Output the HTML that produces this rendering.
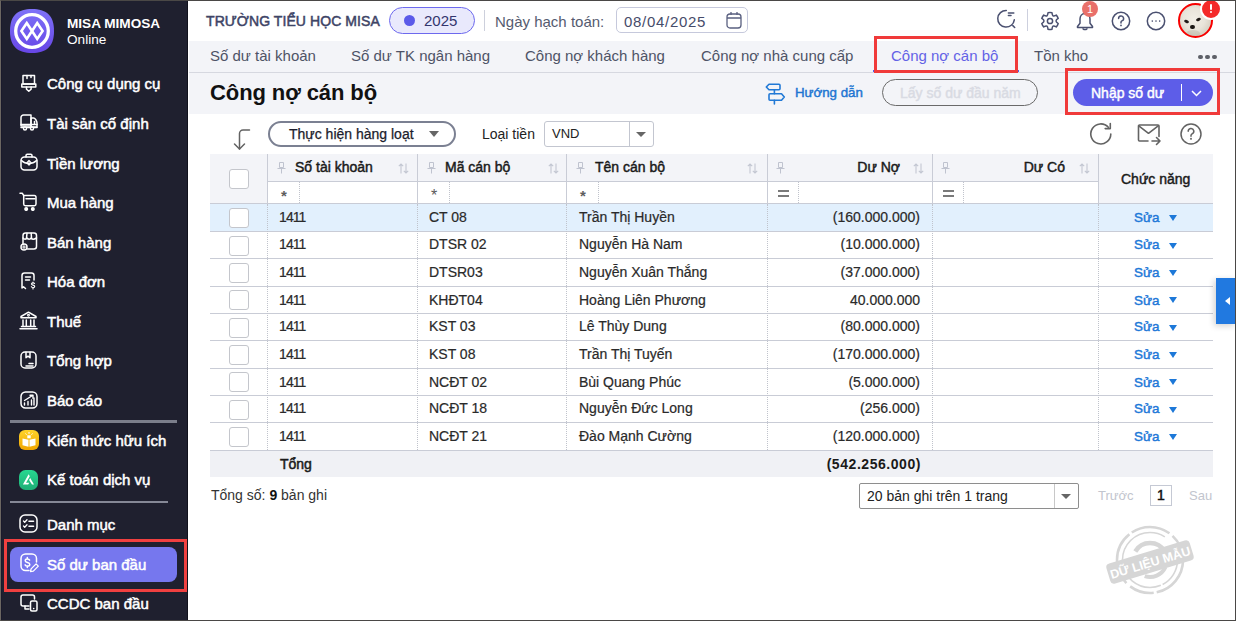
<!DOCTYPE html>
<html><head><meta charset="utf-8">
<style>
*{margin:0;padding:0;box-sizing:border-box}
html,body{width:1236px;height:621px;overflow:hidden;background:#fff;font-family:"Liberation Sans",sans-serif}
.abs{position:absolute}
#frame{position:absolute;left:0;top:0;width:1236px;height:621px;border:1px solid #4a4846;border-left-color:#6b6661;z-index:50;pointer-events:none}
#side{position:absolute;left:0;top:0;width:188px;height:621px;background:#1f202f;border-right:1px solid #10111c;box-shadow:inset 2px 0 #1a1a2c}
.mi{position:absolute;left:47px;color:#fff;font-size:15px;font-weight:normal;white-space:nowrap;-webkit-text-stroke:0.5px #fff}
.sb{font-weight:normal;-webkit-text-stroke:0.45px currentColor}
.ic{position:absolute;left:20px;width:18px;height:18px}
#top{position:absolute;left:188px;top:0;width:1048px;height:41px;background:#fff}
#tabs{position:absolute;left:189px;top:41px;width:1047px;height:32px;background:#f3f4f8;border-bottom:1px solid #d6d8e0}
.tab{position:absolute;top:6px;font-size:15px;color:#4e5366;white-space:nowrap}
#hdr{position:absolute;left:189px;top:73px;width:1047px;height:41px;background:#f3f4f8}
#content{position:absolute;left:189px;top:114px;width:1047px;height:507px;background:#fff}
</style></head><body>
<div id="side">
  
  <div class="abs" style="left:67px;top:16px;color:#fff;font-size:13.6px;font-weight:bold;white-space:nowrap">MISA MIMOSA</div>
  <div class="abs" style="left:67px;top:32px;color:#fff;font-size:13.6px">Online</div>
  <div class="mi" style="top:75px">Công cụ dụng cụ</div>
  <div class="mi" style="top:115px">Tài sản cố định</div>
  <div class="mi" style="top:155px">Tiền lương</div>
  <div class="mi" style="top:194px">Mua hàng</div>
  <div class="mi" style="top:234px">Bán hàng</div>
  <div class="mi" style="top:273px">Hóa đơn</div>
  <div class="mi" style="top:313px">Thuế</div>
  <div class="mi" style="top:352px">Tổng hợp</div>
  <div class="mi" style="top:392px">Báo cáo</div>
  <div class="abs" style="left:10px;top:420px;width:167px;height:3px;background:#7b7e8b"></div>
  <div class="mi" style="top:432px">Kiến thức hữu ích</div>
  <div class="mi" style="top:471px">Kế toán dịch vụ</div>
  <div class="abs" style="left:10px;top:501px;width:158px;height:2px;background:#858896"></div>
  <div class="mi" style="top:516px">Danh mục</div>
  <div class="abs" style="left:4px;top:539px;width:183px;height:53px;border:3px solid #f04040"></div>
  <div class="abs" style="left:10px;top:547px;width:167px;height:35px;border-radius:8px;background:#7677ee"></div>
<svg class="abs" style="left:21px;top:74px" width="16" height="18" viewBox="0 0 16 18" stroke="#fff" stroke-width="1.5" fill="none" stroke-linecap="round" stroke-linejoin="round"><path d="M2 1.5h11.5v8.5H2z"/><path d="M0.8 10h14v3H0.8z"/><path d="M5.5 13v2.2l2.3 2 2.3-2V13"/><path d="M6 1.5v3M10 1.5v2"/></svg>
<svg class="abs" style="left:20px;top:114px" width="18" height="17" viewBox="0 0 18 17" stroke="#fff" stroke-width="1.5" fill="none" stroke-linecap="round" stroke-linejoin="round"><path d="M1 3.5a2.5 2.5 0 0 1 2.5-2.5h7.5v11H1z"/><path d="M11 4h2.5c1.5 0 3.5 3 3.5 5v4h-6z"/><path d="M14.5 7.5v2" /><path d="M1 10.5h16"/><path d="M1 13.5h16"/><circle cx="5" cy="14.5" r="1.5" fill="#1f202f"/><circle cx="12" cy="14.5" r="1.5" fill="#1f202f"/></svg>
<svg class="abs" style="left:20px;top:153px" width="18" height="18" viewBox="0 0 18 18" stroke="#fff" stroke-width="1.5" fill="none" stroke-linecap="round" stroke-linejoin="round"><path d="M6 4V2.5c0-.8.5-1.3 1.3-1.3h3.4c.8 0 1.3.5 1.3 1.3V4"/><rect x="1" y="4" width="16" height="13" rx="3.5"/><path d="M1.5 7.5c2 2 4.5 3 7.5 3s5.5-1 7.5-3"/><path d="M9 7.5l2.2 2.3L9 12 6.8 9.8z" stroke-width="1.2"/><path d="M9 8.3v3" stroke-width="0.9"/></svg>
<svg class="abs" style="left:19px;top:192px" width="19" height="19" viewBox="0 0 19 19" stroke="#fff" stroke-width="1.5" fill="none" stroke-linecap="round" stroke-linejoin="round"><path d="M1 1.2h2.2l1.5 2.3v8.5c0 1 .6 1.7 1.6 1.7h9c1 0 1.7-.7 1.7-1.7V5.3c0-1-.7-1.8-1.7-1.8H4.7"/><path d="M7 6.8h9"/><circle cx="7.2" cy="17" r="1.3" fill="#fff"/><circle cx="13.8" cy="17" r="1.3" fill="#fff"/></svg>
<svg class="abs" style="left:20px;top:232px" width="19" height="19" viewBox="0 0 19 19" stroke="#fff" stroke-width="1.5" fill="none" stroke-linecap="round" stroke-linejoin="round"><path d="M3 12.5V3.5C3 2 4 1 5.5 1h8.5c1.5 0 2.5 1 2.5 2.5v11c0 1.5-1 2.5-2.5 2.5H7.5"/><path d="M3 6c1.2 1.5 3 1.5 4 0 1 1.5 3 1.5 4.2 0 1 1.5 3 1.5 5.3 0"/><path d="M7 1.2l-.5 4.8M11.2 1.2l.3 4.8"/><circle cx="4" cy="15" r="3"/><path d="M4 13.5v3M2.5 15h3" stroke-width="1.1"/></svg>
<svg class="abs" style="left:21px;top:272px" width="15" height="18" viewBox="0 0 15 18" stroke="#fff" stroke-width="1.5" fill="none" stroke-linecap="round" stroke-linejoin="round"><path d="M13 8V3.5C13 2 12 1 10.5 1h-7C2 1 1 2 1 3.5V16l1.5-1.2L4.5 16.5"/><path d="M4.5 5h5M4.5 8h4"/><path d="M12 10.2v.8M12 16.2v.8M13.5 11.5c-.3-.5-.8-.7-1.5-.7-.9 0-1.5.4-1.5 1.1 0 1.6 3.2.8 3.2 2.5 0 .7-.7 1.1-1.6 1.1-.8 0-1.4-.3-1.7-.8" stroke-width="1.2"/></svg>
<svg class="abs" style="left:19px;top:311px" width="19" height="19" viewBox="0 0 19 19" stroke="#fff" stroke-width="1.5" fill="none" stroke-linecap="round" stroke-linejoin="round"><path d="M2 5.5L9.5 1.2 17 5.5v1.3H2z"/><circle cx="9.5" cy="4.3" r="0.9" stroke-width="1.1"/><path d="M4 9v6M7.3 9v6M11.7 9v6M15 9v6"/><path d="M2.5 15.5h14M1 17.8h17"/></svg>
<svg class="abs" style="left:20px;top:351px" width="17" height="18" viewBox="0 0 17 18" stroke="#fff" stroke-width="1.5" fill="none" stroke-linecap="round" stroke-linejoin="round"><rect x="1" y="1" width="15" height="16" rx="4"/><path d="M6 1.2v5.5l2-1.5 2 1.5V1.2"/><path d="M9 12.5h4M6 15h7"/></svg>
<svg class="abs" style="left:20px;top:391px" width="18" height="18" viewBox="0 0 18 18" stroke="#fff" stroke-width="1.5" fill="none" stroke-linecap="round" stroke-linejoin="round"><rect x="1" y="1" width="16" height="16" rx="4.5"/><path d="M4.5 14v-2M8 14v-3.5M11.5 14V9M14 14V7" stroke-width="1.4"/><path d="M4.5 9.5L12.5 4.5M10 4.2h3v3" stroke-width="1.4"/></svg>
<svg class="abs" style="left:19px;top:514px" width="19" height="19" viewBox="0 0 19 19" stroke="#fff" stroke-width="1.5" fill="none" stroke-linecap="round" stroke-linejoin="round"><rect x="1" y="1" width="17" height="17" rx="5"/><path d="M4.5 7l1.2 1.2L8 5.8M4.5 12l1.2 1.2L8 10.8" stroke-width="1.3"/><path d="M10 7.2h4.5M10 12.2h4.5" stroke-width="1.6"/></svg>
<svg class="abs" style="left:20px;top:553px" width="19" height="20" viewBox="0 0 19 20" stroke="#fff" stroke-width="1.5" fill="none" stroke-linecap="round" stroke-linejoin="round"><path d="M16.5 9V5.5c0-2.5-2-4.5-4.5-4.5H5.5C3 1 1 3 1 5.5V13c0 2.5 2 4.5 4.5 4.5H9"/><path d="M9.6 7.2c-.4-.8-1.1-1.2-2.2-1.2-1.3 0-2.2.7-2.2 1.7 0 2.4 4.6 1.2 4.6 3.7 0 1-1 1.7-2.3 1.7-1.1 0-2-.5-2.4-1.3M7.3 4.6v1.4M7.3 13.1v1.4" stroke-width="1.5"/><path d="M10.5 18.5l.6-2.6 5-5 2.2 2.2-5 5z" stroke-width="1.3"/></svg>
<svg class="abs" style="left:20px;top:594px" width="18" height="18" viewBox="0 0 18 18" stroke="#fff" stroke-width="1.5" fill="none" stroke-linecap="round" stroke-linejoin="round"><path d="M14.5 5V3c0-1.1-.9-2-2-2H3C1.9 1 1 1.9 1 3v7c0 1.1.9 2 2 2h6"/><path d="M5 12v3h4"/><rect x="10.5" y="7" width="6.5" height="10" rx="1.5"/><path d="M13.7 14.5v.1" stroke-width="1.6"/></svg>
<svg class="abs" style="left:19px;top:430px" width="20" height="20" viewBox="0 0 20 20"><defs><linearGradient id="gy" x1="0" y1="0" x2="0" y2="1"><stop offset="0" stop-color="#ffd42a"/><stop offset="1" stop-color="#f0a500"/></linearGradient></defs><rect x="0" y="0" width="20" height="20" rx="6" fill="url(#gy)"/><path d="M3.5 8.5l6 1.3v7l-6-1.5zM16.5 8.5l-6 1.3v7l6-1.5z" fill="#fff"/><rect x="8.3" y="5.3" width="3.4" height="3" fill="#fff"/><path d="M10 2v1.8M6.5 3.5l1 1.2M13.5 3.5l-1 1.2" stroke="#fff" stroke-width="1"/></svg>
<svg class="abs" style="left:19px;top:470px" width="19" height="20" viewBox="0 0 19 20"><defs><linearGradient id="gg" x1="0" y1="0" x2="0" y2="1"><stop offset="0" stop-color="#27d790"/><stop offset="1" stop-color="#1eae76"/></linearGradient></defs><rect x="0" y="0" width="19" height="20" rx="6.5" fill="url(#gg)"/><path d="M9.6 4.2L10.8 6.3 7 12.7h3.2l-1 1.7H3.9z" fill="#fff"/><path d="M11.2 8.1L15 14.4h-2l-2.9-4.5z" fill="#fff"/></svg>
<svg class="abs" style="left:10px;top:9px" width="44" height="44" viewBox="0 0 44 44"><defs><linearGradient id="lg" x1="0" y1="0" x2="0" y2="1"><stop offset="0" stop-color="#7e72f8"/><stop offset="1" stop-color="#6746e6"/></linearGradient></defs><path d="M22 0C36 0 44 6 44 22S36 44 22 44 0 38 0 22 8 0 22 0z" fill="url(#lg)"/><circle cx="22" cy="22" r="16.3" fill="none" stroke="#fff" stroke-width="3.3"/><path d="M16.8 14L11.4 22 16.8 30 22 22 27.2 30 32.6 22 27.2 14 22 22z" fill="none" stroke="#fff" stroke-width="2.6" stroke-linejoin="miter"/></svg>
  <div class="mi" style="top:556px">Số dư ban đầu</div>
  <div class="mi" style="top:595px">CCDC ban đầu</div>
</div>
<div id="top">
  <div class="abs" style="left:18px;top:13px;font-size:14px;color:#3e4466;white-space:nowrap;letter-spacing:0.08px;-webkit-text-stroke:0.5px #3e4466">TRƯỜNG TIỂU HỌC MISA</div>
  <div class="abs" style="left:201px;top:7px;width:86px;height:27px;border:1px solid #6d69ee;border-radius:14px;background:#e9e9fc"></div>
  <div class="abs" style="left:216px;top:15px;width:11px;height:11px;border-radius:50%;background:#5b5ae9"></div>
  <div class="abs" style="left:236px;top:12px;font-size:15px;color:#33356e">2025</div>
  <div class="abs" style="left:296px;top:10px;width:1px;height:21px;background:#cdd0dc"></div>
  <div class="abs" style="left:307px;top:13px;font-size:15px;color:#555b70;white-space:nowrap">Ngày hạch toán:</div>
  <div class="abs" style="left:428px;top:7px;width:132px;height:26px;border:1px solid #c6c9dc;border-radius:5px"></div>
  <div class="abs" style="left:436px;top:13px;font-size:15px;color:#464c6a;letter-spacing:0.7px">08/04/2025</div>
  <svg class="abs" style="left:538px;top:11px" width="16" height="18" viewBox="0 0 16 18" fill="none" stroke="#5a6080" stroke-width="1.3"><rect x="1" y="3" width="14" height="14" rx="3"/><path d="M1 7h14M5 1v3M11 1v3"/><path d="M5.5 10.5v.1M5.5 13v.1M8 10.5v.1" stroke-width="1.2"/></svg>
  <svg class="abs" style="left:995px;top:9px;margin-left:-188px" width="22" height="22" viewBox="0 0 22 22" fill="none" stroke="#4a5070" stroke-width="1.5" stroke-linecap="round"><path d="M11.3 1.5A8.3 8.3 0 1 0 19.3 10.8"/><path d="M13.4 3.9h5.4M13.4 6.6h2.6M17.8 16.6l1.9 1.9"/></svg>
  <div class="abs" style="left:839px;top:9px;width:1px;height:22px;background:#cdd0de"></div>
  <svg class="abs" style="left:850px;top:9px" width="24" height="24" viewBox="0 0 24 24" fill="none" stroke="#4a5070" stroke-width="1.5" stroke-linejoin="round"><path d="M10.07 3.62 A8.6 8.6 0 0 1 13.93 3.62 Q14.3 6.3 15.00 6.80 Q15.9 7.3 18.29 6.13 A8.6 8.6 0 0 1 20.22 9.49 Q18 10.9 18.00 12.00 Q18 13.1 20.22 14.51 A8.6 8.6 0 0 1 18.29 17.87 Q15.9 16.7 15.00 17.20 Q14.3 17.7 13.93 20.38 A8.6 8.6 0 0 1 10.07 20.38 Q9.7 17.7 9.00 17.20 Q8.1 16.7 5.71 17.87 A8.6 8.6 0 0 1 3.78 14.51 Q6 13.1 6.00 12.00 Q6 10.9 3.78 9.49 A8.6 8.6 0 0 1 5.71 6.13 Q8.1 7.3 9.00 6.80 Q9.7 6.3 10.07 3.62Z"/><circle cx="12" cy="12" r="2.6"/></svg>
  <svg class="abs" style="left:888px;top:12px" width="18" height="19" viewBox="0 0 18 19" fill="none" stroke="#4a5070" stroke-width="1.5" stroke-linejoin="round"><path d="M9 1.5c-3.2 0-5 2.6-5 5.5v4.2L1.5 14.5v1h15v-1L14 11.2V7c0-2.9-1.8-5.5-5-5.5z"/><path d="M7 16.2a2 1.4 0 0 0 4 0"/></svg>
  <div class="abs" style="left:894px;top:1px;width:16px;height:16px;border-radius:50%;background:#e9706a;color:#fff;font-size:11px;text-align:center;line-height:16px">1</div>
  <svg class="abs" style="left:923px;top:11px" width="20" height="20" viewBox="0 0 20 20" fill="none" stroke="#4a5070" stroke-width="1.5" stroke-linecap="round"><circle cx="10" cy="10" r="8.7"/><path d="M7.6 7.6a2.5 2.5 0 1 1 3.3 2.3c-.6.3-.9.7-.9 1.4v.6"/><path d="M10 14.3v.2" stroke-width="1.7"/></svg>
  <svg class="abs" style="left:958px;top:11px" width="20" height="20" viewBox="0 0 20 20" fill="none" stroke="#4a5070" stroke-width="1.5" stroke-linecap="round"><circle cx="10" cy="10" r="8.7"/><path d="M6.3 10v.1M10 10v.1M13.7 10v.1" stroke-width="1.6"/></svg>
  <div class="abs" style="left:990px;top:3px;width:35px;height:35px;border-radius:50%;border:2px solid #f80000;background:radial-gradient(ellipse at 45% 45%,#f2eee6 0,#e9e4da 45%,#d6d0c2 75%,#b9b4a4 100%);overflow:hidden">
    <span style="position:absolute;left:3.5px;top:15px;width:5px;height:3.2px;border-radius:50%;background:#221c1a;transform:rotate(25deg)"></span>
    <span style="position:absolute;left:16px;top:12.8px;width:5px;height:3.2px;border-radius:50%;background:#221c1a;transform:rotate(-25deg)"></span>
    <span style="position:absolute;left:10.2px;top:19.5px;width:4.6px;height:4.4px;border-radius:45%;background:#1a1614"></span>
    <span style="position:absolute;left:6px;top:25px;width:14px;height:7px;border-radius:50%;background:rgba(150,150,130,0.25)"></span>
  </div>
  <div class="abs" style="left:1012px;top:-2px;width:22px;height:22px;border-radius:50%;background:#f42a2a;border:2px solid #fff;"><span style="position:absolute;left:7.7px;top:4.3px;width:2.6px;height:5.6px;background:#fff;border-radius:1px"></span><span style="position:absolute;left:7.7px;top:11px;width:2.6px;height:2.3px;background:#fff;border-radius:1px"></span></div>
</div>
<div id="tabs">
  <div class="tab" style="left:21px">Số dư tài khoản</div>
  <div class="tab" style="left:162px">Số dư TK ngân hàng</div>
  <div class="tab" style="left:336px">Công nợ khách hàng</div>
  <div class="tab" style="left:512px">Công nợ nhà cung cấp</div>
  <div class="tab" style="left:702px;color:#6362e6">Công nợ cán bộ</div>
  <div class="tab" style="left:845px">Tồn kho</div>
  <div class="abs" style="left:1009px;top:13.5px;width:19px;height:5px"><span style="position:absolute;left:0.3px;top:0;width:4.6px;height:4.6px;border-radius:50%;background:#5e6068"></span><span style="position:absolute;left:7.2px;top:0;width:4.6px;height:4.6px;border-radius:50%;background:#5e6068"></span><span style="position:absolute;left:14.1px;top:0;width:4.6px;height:4.6px;border-radius:50%;background:#5e6068"></span></div>
</div>
<div class="abs" style="left:873px;top:70px;width:146px;height:2px;background:#5a58ea"></div>
<div class="abs" style="left:874px;top:36px;width:144px;height:37px;border:3px solid #f03a3a;z-index:5"></div>
<div id="hdr">
  <div class="abs" style="left:21px;top:7px;font-size:22px;font-weight:bold;color:#111;white-space:nowrap;letter-spacing:-0.1px">Công nợ cán bộ</div>
  <svg class="abs" style="left:576px;top:10px" width="21" height="22" viewBox="0 0 21 22" fill="none" stroke="#2179d6" stroke-width="1.6" stroke-linejoin="round" stroke-linecap="round"><path d="M1.3 4L4 1.2h10a1 1 0 0 1 1 1V5.8a1 1 0 0 1-1 1H4z"/><path d="M9.4 6.8V10.8M9.4 17.2V21"/><path d="M5 10.8h11.5L19.3 14l-2.8 3.2H5a1 1 0 0 1-1-1v-4.4a1 1 0 0 1 1-1z"/></svg>
  <div class="abs" style="left:606px;top:12px;font-size:13.3px;color:#1f76d2;white-space:nowrap;-webkit-text-stroke:0.45px #1f76d2">Hướng dẫn</div>
  <div class="abs" style="left:693px;top:6px;width:156px;height:27px;border:1px solid #6a6a6a;border-radius:14px"></div>
  <div class="abs" style="left:711px;top:12px;font-size:14px;color:#d9dbe3;white-space:nowrap;-webkit-text-stroke:0.45px #d9dbe3">Lấy số dư đầu năm</div>
  <div class="abs" style="left:884px;top:6px;width:140px;height:27px;border-radius:14px;background:#5d5de8"></div>
  <div class="abs" style="left:902px;top:12px;font-size:14px;color:#fff;white-space:nowrap;-webkit-text-stroke:0.45px #fff">Nhập số dư</div>
  <div class="abs" style="left:992px;top:11px;width:1px;height:17px;background:#fff"></div>
  <svg class="abs" style="left:1002px;top:17px" width="11" height="7" viewBox="0 0 11 7" fill="none" stroke="#fff" stroke-width="1.5"><path d="M1 1l4.5 4.5L10 1"/></svg>
</div>
<div class="abs" style="left:1065px;top:68px;width:155px;height:47px;border:3px solid #f03a3a;z-index:5"></div>
<div id="content"></div>
<div id="cwrap">
<svg class="abs" style="left:231px;top:128px" width="22" height="23" viewBox="0 0 22 23" fill="none" stroke="#626262" stroke-width="1.5" stroke-linecap="round" stroke-linejoin="round"><path d="M18.5 2H12c-1.8 0-3.5 1.6-3.5 3.5V21"/><path d="M3.5 16l5 5 5-5"/></svg>
<div class="abs" style="left:268px;top:121px;width:188px;height:26px;border:2px solid #7b8092;border-radius:13px"></div>
<div class="abs" style="left:289px;top:126px;font-size:14px;color:#1b1c2c;white-space:nowrap;-webkit-text-stroke:0.25px #1b1c2c">Thực hiện hàng loạt</div>
<div class="abs" style="left:429px;top:131px;width:0;height:0;border-left:5px solid transparent;border-right:5px solid transparent;border-top:6px solid #666"></div>
<div class="abs" style="left:482px;top:126px;font-size:14px;color:#222;white-space:nowrap">Loại tiền</div>
<div class="abs" style="left:544px;top:121px;width:110px;height:26px;border:1px solid #c3c6d0;border-radius:3px"></div>
<div class="abs" style="left:629px;top:122px;width:1px;height:24px;background:#c3c6d0"></div>
<div class="abs" style="left:552px;top:126px;font-size:13px;color:#222;white-space:nowrap">VND</div>
<div class="abs" style="left:636px;top:132px;width:0;height:0;border-left:5px solid transparent;border-right:5px solid transparent;border-top:5px solid #666"></div>
<svg class="abs" style="left:1089px;top:122px" width="24" height="24" viewBox="0 0 24 24" fill="none" stroke="#636363" stroke-width="1.6" stroke-linecap="round" stroke-linejoin="round"><path d="M21.8 12A10 10 0 1 1 19.3 5.3"/><path d="M16.2 6.6h5.1V1.6"/></svg>
<svg class="abs" style="left:1137px;top:123px" width="25" height="23" viewBox="0 0 25 23" fill="none" stroke="#636363" stroke-width="1.6" stroke-linecap="round" stroke-linejoin="round"><path d="M11 18H2.5a1 1 0 0 1-1-1V3a1 1 0 0 1 1-1h18.5a1 1 0 0 1 1 1v10.5"/><path d="M1.8 2.8l9.7 7.5 9.7-7.5"/><path d="M15 18h8M19.5 14.5L23 18l-3.5 3.5"/></svg>
<svg class="abs" style="left:1180px;top:123px" width="22" height="22" viewBox="0 0 22 22" fill="none" stroke="#636363" stroke-width="1.5" stroke-linecap="round"><circle cx="11" cy="11" r="10"/><path d="M8.2 8.3a2.8 2.8 0 1 1 3.9 2.5c-.7.4-1.1.8-1.1 1.6v.8"/><path d="M11 15.6v.3" stroke-width="1.8"/></svg>
<div class="abs" style="left:210px;top:154px;width:1003px;height:50px;background:#f3f4f8"></div>
<div class="abs" style="left:268px;top:182px;width:831px;height:21px;background:#fff"></div>
<div class="abs" style="left:210px;top:203px;width:1003px;height:1px;background:#c9ccd6"></div>
<div class="abs" style="left:268px;top:181px;width:831px;height:1px;background:#c9ccd6"></div>
<div class="abs" style="left:267px;top:154px;width:1px;height:50px;background:#c9ccd6"></div>
<div class="abs" style="left:417px;top:154px;width:1px;height:50px;background:#c9ccd6"></div>
<div class="abs" style="left:566px;top:154px;width:1px;height:50px;background:#c9ccd6"></div>
<div class="abs" style="left:767px;top:154px;width:1px;height:50px;background:#c9ccd6"></div>
<div class="abs" style="left:932px;top:154px;width:1px;height:50px;background:#c9ccd6"></div>
<div class="abs" style="left:1098px;top:154px;width:1px;height:50px;background:#c9ccd6"></div>
<div class="abs" style="left:229px;top:169px;width:20px;height:20px;border:1px solid #c4c6cc;border-radius:3px;background:#fff"></div>
<div class="abs" style="left:295px;top:159px;font-size:14px;color:#1a1a1a;white-space:nowrap;-webkit-text-stroke:0.45px #1a1a1a">Số tài khoản</div>
<div class="abs" style="left:445px;top:159px;font-size:14px;color:#1a1a1a;white-space:nowrap;-webkit-text-stroke:0.45px #1a1a1a">Mã cán bộ</div>
<div class="abs" style="left:595px;top:159px;font-size:14px;color:#1a1a1a;white-space:nowrap;-webkit-text-stroke:0.45px #1a1a1a">Tên cán bộ</div>
<div class="abs" style="right:336px;top:159px;font-size:14px;color:#1a1a1a;white-space:nowrap;-webkit-text-stroke:0.45px #1a1a1a">Dư Nợ</div>
<div class="abs" style="right:171px;top:159px;font-size:14px;color:#1a1a1a;white-space:nowrap;-webkit-text-stroke:0.45px #1a1a1a">Dư Có</div>
<svg class="abs" style="left:277px;top:162px" width="9" height="12" viewBox="0 0 9 12" fill="none" stroke="#bfc3cf" stroke-width="1"><path d="M2.5 0.5h4v5h-4z M0.5 6.5h8 M4.5 6.5v5"/></svg>
<svg class="abs" style="left:427px;top:162px" width="9" height="12" viewBox="0 0 9 12" fill="none" stroke="#bfc3cf" stroke-width="1"><path d="M2.5 0.5h4v5h-4z M0.5 6.5h8 M4.5 6.5v5"/></svg>
<svg class="abs" style="left:576px;top:162px" width="9" height="12" viewBox="0 0 9 12" fill="none" stroke="#bfc3cf" stroke-width="1"><path d="M2.5 0.5h4v5h-4z M0.5 6.5h8 M4.5 6.5v5"/></svg>
<svg class="abs" style="left:776px;top:162px" width="9" height="12" viewBox="0 0 9 12" fill="none" stroke="#bfc3cf" stroke-width="1"><path d="M2.5 0.5h4v5h-4z M0.5 6.5h8 M4.5 6.5v5"/></svg>
<svg class="abs" style="left:941px;top:162px" width="9" height="12" viewBox="0 0 9 12" fill="none" stroke="#bfc3cf" stroke-width="1"><path d="M2.5 0.5h4v5h-4z M0.5 6.5h8 M4.5 6.5v5"/></svg>
<svg class="abs" style="left:398px;top:163px" width="11" height="11" viewBox="0 0 11 11" fill="none" stroke="#c3c7d2" stroke-width="1.1"><path d="M3 10.5V1M0.8 3.2L3 1l2.2 2.2M8 0.5V10M5.8 7.8L8 10l2.2-2.2"/></svg>
<svg class="abs" style="left:548px;top:163px" width="11" height="11" viewBox="0 0 11 11" fill="none" stroke="#c3c7d2" stroke-width="1.1"><path d="M3 10.5V1M0.8 3.2L3 1l2.2 2.2M8 0.5V10M5.8 7.8L8 10l2.2-2.2"/></svg>
<svg class="abs" style="left:747px;top:163px" width="11" height="11" viewBox="0 0 11 11" fill="none" stroke="#c3c7d2" stroke-width="1.1"><path d="M3 10.5V1M0.8 3.2L3 1l2.2 2.2M8 0.5V10M5.8 7.8L8 10l2.2-2.2"/></svg>
<svg class="abs" style="left:913px;top:163px" width="11" height="11" viewBox="0 0 11 11" fill="none" stroke="#c3c7d2" stroke-width="1.1"><path d="M3 10.5V1M0.8 3.2L3 1l2.2 2.2M8 0.5V10M5.8 7.8L8 10l2.2-2.2"/></svg>
<svg class="abs" style="left:1079px;top:163px" width="11" height="11" viewBox="0 0 11 11" fill="none" stroke="#c3c7d2" stroke-width="1.1"><path d="M3 10.5V1M0.8 3.2L3 1l2.2 2.2M8 0.5V10M5.8 7.8L8 10l2.2-2.2"/></svg>
<div class="abs" style="left:1121px;top:171px;font-size:14px;color:#1a1a1a;white-space:nowrap;-webkit-text-stroke:0.45px #1a1a1a">Chức năng</div>
<div class="abs" style="left:281px;top:187px;font-size:15px;font-weight:bold;color:#5e5e5e">*</div>
<div class="abs" style="left:431px;top:187px;font-size:16px;color:#5a5a5a">*</div>
<div class="abs" style="left:580px;top:187px;font-size:15px;font-weight:bold;color:#5e5e5e">*</div>
<div class="abs" style="left:778px;top:190px;width:11px;height:2px;background:#7a7a7a"></div><div class="abs" style="left:778px;top:195px;width:11px;height:2px;background:#7a7a7a"></div>
<div class="abs" style="left:943px;top:190px;width:11px;height:2px;background:#7a7a7a"></div><div class="abs" style="left:943px;top:195px;width:11px;height:2px;background:#7a7a7a"></div>
<div class="abs" style="left:299px;top:182px;width:0;height:21px;border-left:1px dotted #c0c3cc"></div>
<div class="abs" style="left:449px;top:182px;width:0;height:21px;border-left:1px dotted #c0c3cc"></div>
<div class="abs" style="left:598px;top:182px;width:0;height:21px;border-left:1px dotted #c0c3cc"></div>
<div class="abs" style="left:798px;top:182px;width:0;height:21px;border-left:1px dotted #c0c3cc"></div>
<div class="abs" style="left:963px;top:182px;width:0;height:21px;border-left:1px dotted #c0c3cc"></div>
<div class="abs" style="left:210px;top:204px;width:1003px;height:27px;background:#e2f0fd"></div>
<div class="abs" style="left:210px;top:231px;width:1003px;height:1px;background:#c9ccd6"></div>
<div class="abs" style="left:229px;top:208px;width:20px;height:20px;border:1px solid #c4c6cc;border-radius:3px;background:#fff"></div>
<div class="abs" style="left:279px;top:209px;font-size:14px;color:#2a2a2a;-webkit-text-stroke:0.2px #2a2a2a;letter-spacing:-0.9px">1411</div>
<div class="abs" style="left:429px;top:209px;font-size:14px;color:#2a2a2a;-webkit-text-stroke:0.2px #2a2a2a;white-space:nowrap">CT 08</div>
<div class="abs" style="left:579px;top:209px;font-size:14px;color:#2a2a2a;-webkit-text-stroke:0.2px #2a2a2a;white-space:nowrap">Trần Thị Huyền</div>
<div class="abs" style="right:316px;top:209px;font-size:14px;color:#2a2a2a;-webkit-text-stroke:0.2px #2a2a2a;white-space:nowrap">(160.000.000)</div>
<div class="abs" style="left:1134px;top:210px;font-size:13.4px;color:#1d78d8;-webkit-text-stroke:0.45px #1d78d8">Sửa</div>
<div class="abs" style="left:1169px;top:215px;width:0;height:0;border-left:4.7px solid transparent;border-right:4.7px solid transparent;border-top:6px solid #1d78d8"></div>
<div class="abs" style="left:210px;top:258px;width:1003px;height:1px;background:#c9ccd6"></div>
<div class="abs" style="left:229px;top:236px;width:20px;height:20px;border:1px solid #c4c6cc;border-radius:3px;background:#fff"></div>
<div class="abs" style="left:279px;top:236px;font-size:14px;color:#2a2a2a;-webkit-text-stroke:0.2px #2a2a2a;letter-spacing:-0.9px">1411</div>
<div class="abs" style="left:429px;top:236px;font-size:14px;color:#2a2a2a;-webkit-text-stroke:0.2px #2a2a2a;white-space:nowrap">DTSR 02</div>
<div class="abs" style="left:579px;top:236px;font-size:14px;color:#2a2a2a;-webkit-text-stroke:0.2px #2a2a2a;white-space:nowrap">Nguyễn Hà Nam</div>
<div class="abs" style="right:316px;top:236px;font-size:14px;color:#2a2a2a;-webkit-text-stroke:0.2px #2a2a2a;white-space:nowrap">(10.000.000)</div>
<div class="abs" style="left:1134px;top:237px;font-size:13.4px;color:#1d78d8;-webkit-text-stroke:0.45px #1d78d8">Sửa</div>
<div class="abs" style="left:1169px;top:243px;width:0;height:0;border-left:4.7px solid transparent;border-right:4.7px solid transparent;border-top:6px solid #1d78d8"></div>
<div class="abs" style="left:210px;top:286px;width:1003px;height:1px;background:#c9ccd6"></div>
<div class="abs" style="left:229px;top:263px;width:20px;height:20px;border:1px solid #c4c6cc;border-radius:3px;background:#fff"></div>
<div class="abs" style="left:279px;top:264px;font-size:14px;color:#2a2a2a;-webkit-text-stroke:0.2px #2a2a2a;letter-spacing:-0.9px">1411</div>
<div class="abs" style="left:429px;top:264px;font-size:14px;color:#2a2a2a;-webkit-text-stroke:0.2px #2a2a2a;white-space:nowrap">DTSR03</div>
<div class="abs" style="left:579px;top:264px;font-size:14px;color:#2a2a2a;-webkit-text-stroke:0.2px #2a2a2a;white-space:nowrap">Nguyễn Xuân Thắng</div>
<div class="abs" style="right:316px;top:264px;font-size:14px;color:#2a2a2a;-webkit-text-stroke:0.2px #2a2a2a;white-space:nowrap">(37.000.000)</div>
<div class="abs" style="left:1134px;top:265px;font-size:13.4px;color:#1d78d8;-webkit-text-stroke:0.45px #1d78d8">Sửa</div>
<div class="abs" style="left:1169px;top:270px;width:0;height:0;border-left:4.7px solid transparent;border-right:4.7px solid transparent;border-top:6px solid #1d78d8"></div>
<div class="abs" style="left:210px;top:313px;width:1003px;height:1px;background:#c9ccd6"></div>
<div class="abs" style="left:229px;top:290px;width:20px;height:20px;border:1px solid #c4c6cc;border-radius:3px;background:#fff"></div>
<div class="abs" style="left:279px;top:292px;font-size:14px;color:#2a2a2a;-webkit-text-stroke:0.2px #2a2a2a;letter-spacing:-0.9px">1411</div>
<div class="abs" style="left:429px;top:292px;font-size:14px;color:#2a2a2a;-webkit-text-stroke:0.2px #2a2a2a;white-space:nowrap">KHĐT04</div>
<div class="abs" style="left:579px;top:292px;font-size:14px;color:#2a2a2a;-webkit-text-stroke:0.2px #2a2a2a;white-space:nowrap">Hoàng Liên Phương</div>
<div class="abs" style="right:316px;top:292px;font-size:14px;color:#2a2a2a;-webkit-text-stroke:0.2px #2a2a2a;white-space:nowrap">40.000.000</div>
<div class="abs" style="left:1134px;top:293px;font-size:13.4px;color:#1d78d8;-webkit-text-stroke:0.45px #1d78d8">Sửa</div>
<div class="abs" style="left:1169px;top:297px;width:0;height:0;border-left:4.7px solid transparent;border-right:4.7px solid transparent;border-top:6px solid #1d78d8"></div>
<div class="abs" style="left:210px;top:340px;width:1003px;height:1px;background:#c9ccd6"></div>
<div class="abs" style="left:229px;top:318px;width:20px;height:20px;border:1px solid #c4c6cc;border-radius:3px;background:#fff"></div>
<div class="abs" style="left:279px;top:318px;font-size:14px;color:#2a2a2a;-webkit-text-stroke:0.2px #2a2a2a;letter-spacing:-0.9px">1411</div>
<div class="abs" style="left:429px;top:318px;font-size:14px;color:#2a2a2a;-webkit-text-stroke:0.2px #2a2a2a;white-space:nowrap">KST 03</div>
<div class="abs" style="left:579px;top:318px;font-size:14px;color:#2a2a2a;-webkit-text-stroke:0.2px #2a2a2a;white-space:nowrap">Lê Thùy Dung</div>
<div class="abs" style="right:316px;top:318px;font-size:14px;color:#2a2a2a;-webkit-text-stroke:0.2px #2a2a2a;white-space:nowrap">(80.000.000)</div>
<div class="abs" style="left:1134px;top:319px;font-size:13.4px;color:#1d78d8;-webkit-text-stroke:0.45px #1d78d8">Sửa</div>
<div class="abs" style="left:1169px;top:325px;width:0;height:0;border-left:4.7px solid transparent;border-right:4.7px solid transparent;border-top:6px solid #1d78d8"></div>
<div class="abs" style="left:210px;top:368px;width:1003px;height:1px;background:#c9ccd6"></div>
<div class="abs" style="left:229px;top:345px;width:20px;height:20px;border:1px solid #c4c6cc;border-radius:3px;background:#fff"></div>
<div class="abs" style="left:279px;top:346px;font-size:14px;color:#2a2a2a;-webkit-text-stroke:0.2px #2a2a2a;letter-spacing:-0.9px">1411</div>
<div class="abs" style="left:429px;top:346px;font-size:14px;color:#2a2a2a;-webkit-text-stroke:0.2px #2a2a2a;white-space:nowrap">KST 08</div>
<div class="abs" style="left:579px;top:346px;font-size:14px;color:#2a2a2a;-webkit-text-stroke:0.2px #2a2a2a;white-space:nowrap">Trần Thị Tuyến</div>
<div class="abs" style="right:316px;top:346px;font-size:14px;color:#2a2a2a;-webkit-text-stroke:0.2px #2a2a2a;white-space:nowrap">(170.000.000)</div>
<div class="abs" style="left:1134px;top:347px;font-size:13.4px;color:#1d78d8;-webkit-text-stroke:0.45px #1d78d8">Sửa</div>
<div class="abs" style="left:1169px;top:352px;width:0;height:0;border-left:4.7px solid transparent;border-right:4.7px solid transparent;border-top:6px solid #1d78d8"></div>
<div class="abs" style="left:210px;top:395px;width:1003px;height:1px;background:#c9ccd6"></div>
<div class="abs" style="left:229px;top:372px;width:20px;height:20px;border:1px solid #c4c6cc;border-radius:3px;background:#fff"></div>
<div class="abs" style="left:279px;top:374px;font-size:14px;color:#2a2a2a;-webkit-text-stroke:0.2px #2a2a2a;letter-spacing:-0.9px">1411</div>
<div class="abs" style="left:429px;top:374px;font-size:14px;color:#2a2a2a;-webkit-text-stroke:0.2px #2a2a2a;white-space:nowrap">NCĐT 02</div>
<div class="abs" style="left:579px;top:374px;font-size:14px;color:#2a2a2a;-webkit-text-stroke:0.2px #2a2a2a;white-space:nowrap">Bùi Quang Phúc</div>
<div class="abs" style="right:316px;top:374px;font-size:14px;color:#2a2a2a;-webkit-text-stroke:0.2px #2a2a2a;white-space:nowrap">(5.000.000)</div>
<div class="abs" style="left:1134px;top:375px;font-size:13.4px;color:#1d78d8;-webkit-text-stroke:0.45px #1d78d8">Sửa</div>
<div class="abs" style="left:1169px;top:379px;width:0;height:0;border-left:4.7px solid transparent;border-right:4.7px solid transparent;border-top:6px solid #1d78d8"></div>
<div class="abs" style="left:210px;top:422px;width:1003px;height:1px;background:#c9ccd6"></div>
<div class="abs" style="left:229px;top:400px;width:20px;height:20px;border:1px solid #c4c6cc;border-radius:3px;background:#fff"></div>
<div class="abs" style="left:279px;top:400px;font-size:14px;color:#2a2a2a;-webkit-text-stroke:0.2px #2a2a2a;letter-spacing:-0.9px">1411</div>
<div class="abs" style="left:429px;top:400px;font-size:14px;color:#2a2a2a;-webkit-text-stroke:0.2px #2a2a2a;white-space:nowrap">NCĐT 18</div>
<div class="abs" style="left:579px;top:400px;font-size:14px;color:#2a2a2a;-webkit-text-stroke:0.2px #2a2a2a;white-space:nowrap">Nguyễn Đức Long</div>
<div class="abs" style="right:316px;top:400px;font-size:14px;color:#2a2a2a;-webkit-text-stroke:0.2px #2a2a2a;white-space:nowrap">(256.000)</div>
<div class="abs" style="left:1134px;top:401px;font-size:13.4px;color:#1d78d8;-webkit-text-stroke:0.45px #1d78d8">Sửa</div>
<div class="abs" style="left:1169px;top:407px;width:0;height:0;border-left:4.7px solid transparent;border-right:4.7px solid transparent;border-top:6px solid #1d78d8"></div>
<div class="abs" style="left:210px;top:450px;width:1003px;height:1px;background:#c9ccd6"></div>
<div class="abs" style="left:229px;top:427px;width:20px;height:20px;border:1px solid #c4c6cc;border-radius:3px;background:#fff"></div>
<div class="abs" style="left:279px;top:428px;font-size:14px;color:#2a2a2a;-webkit-text-stroke:0.2px #2a2a2a;letter-spacing:-0.9px">1411</div>
<div class="abs" style="left:429px;top:428px;font-size:14px;color:#2a2a2a;-webkit-text-stroke:0.2px #2a2a2a;white-space:nowrap">NCĐT 21</div>
<div class="abs" style="left:579px;top:428px;font-size:14px;color:#2a2a2a;-webkit-text-stroke:0.2px #2a2a2a;white-space:nowrap">Đào Mạnh Cường</div>
<div class="abs" style="right:316px;top:428px;font-size:14px;color:#2a2a2a;-webkit-text-stroke:0.2px #2a2a2a;white-space:nowrap">(120.000.000)</div>
<div class="abs" style="left:1134px;top:429px;font-size:13.4px;color:#1d78d8;-webkit-text-stroke:0.45px #1d78d8">Sửa</div>
<div class="abs" style="left:1169px;top:434px;width:0;height:0;border-left:4.7px solid transparent;border-right:4.7px solid transparent;border-top:6px solid #1d78d8"></div>
<div class="abs" style="left:267px;top:204px;width:0;height:246px;border-left:1px dotted #c0c3cc"></div>
<div class="abs" style="left:417px;top:204px;width:0;height:246px;border-left:1px dotted #c0c3cc"></div>
<div class="abs" style="left:566px;top:204px;width:0;height:246px;border-left:1px dotted #c0c3cc"></div>
<div class="abs" style="left:767px;top:204px;width:0;height:246px;border-left:1px dotted #c0c3cc"></div>
<div class="abs" style="left:932px;top:204px;width:0;height:246px;border-left:1px dotted #c0c3cc"></div>
<div class="abs" style="left:1098px;top:204px;width:0;height:246px;border-left:1px dotted #c0c3cc"></div>
<div class="abs" style="left:210px;top:451px;width:1003px;height:26px;background:#f0f1f5"></div>
<div class="abs" style="left:280px;top:456px;font-size:14px;color:#1a1a1a;-webkit-text-stroke:0.5px #1a1a1a">Tổng</div>
<div class="abs" style="right:315px;top:456px;font-size:14px;font-weight:bold;color:#1a1a1a;letter-spacing:0.55px">(542.256.000)</div>
<div class="abs" style="left:211px;top:487px;font-size:14px;color:#333;white-space:nowrap">Tổng số: <b style="color:#111">9</b> bản ghi</div>
<div class="abs" style="left:859px;top:483px;width:220px;height:26px;border:1px solid #8e8e8e;border-radius:2px"></div>
<div class="abs" style="left:1054px;top:484px;width:1px;height:24px;background:#c8c8c8"></div>
<div class="abs" style="left:867px;top:488px;font-size:14px;color:#222;white-space:nowrap">20 bản ghi trên 1 trang</div>
<div class="abs" style="left:1061px;top:494px;width:0;height:0;border-left:5px solid transparent;border-right:5px solid transparent;border-top:5px solid #666"></div>
<div class="abs" style="left:1098px;top:488px;font-size:13px;color:#c2c5ce">Trước</div>
<div class="abs" style="left:1150px;top:485px;width:22px;height:21px;border:1px solid #c5c9d4;font-size:14px;color:#111;-webkit-text-stroke:0.5px #111;text-align:center;line-height:19px">1</div>
<div class="abs" style="left:1189px;top:488px;font-size:13px;color:#c2c5ce">Sau</div>
<div class="abs" style="left:1216px;top:278px;width:20px;height:46px;background:#2179e0;box-shadow:-2px 2px 6px rgba(0,0,0,0.18)"></div>
<div class="abs" style="left:1225px;top:297px;width:0;height:0;border-top:4.5px solid transparent;border-bottom:4.5px solid transparent;border-right:5px solid #fff"></div>
<svg class="abs" style="left:1104px;top:520px" width="94" height="84" viewBox="0 0 94 84"><g fill="none" stroke="#d6d6d6"><circle cx="46" cy="40" r="33" stroke-width="2.6" stroke-dasharray="45 3 25 5 55 3 40 4"/><circle cx="46" cy="40" r="27.5" stroke-width="1.6" stroke-dasharray="30 2 50 3 60"/><path d="M31.3 31.5A17 17 0 0 1 60.7 31.5" stroke-width="4.5"/><path d="M61.4 47.2A17 17 0 0 1 40.7 56.2" stroke-width="4"/></g><g transform="rotate(-17 46 42)"><rect x="2.5" y="31.5" width="87" height="21" rx="4" fill="#d6d6d6"/><text x="46" y="47" text-anchor="middle" font-family="Liberation Sans" font-weight="bold" font-size="12.5" fill="#fff">DỮ LIỆU MẪU</text></g></svg>
</div>
<div id="frame"></div>
</body></html>
